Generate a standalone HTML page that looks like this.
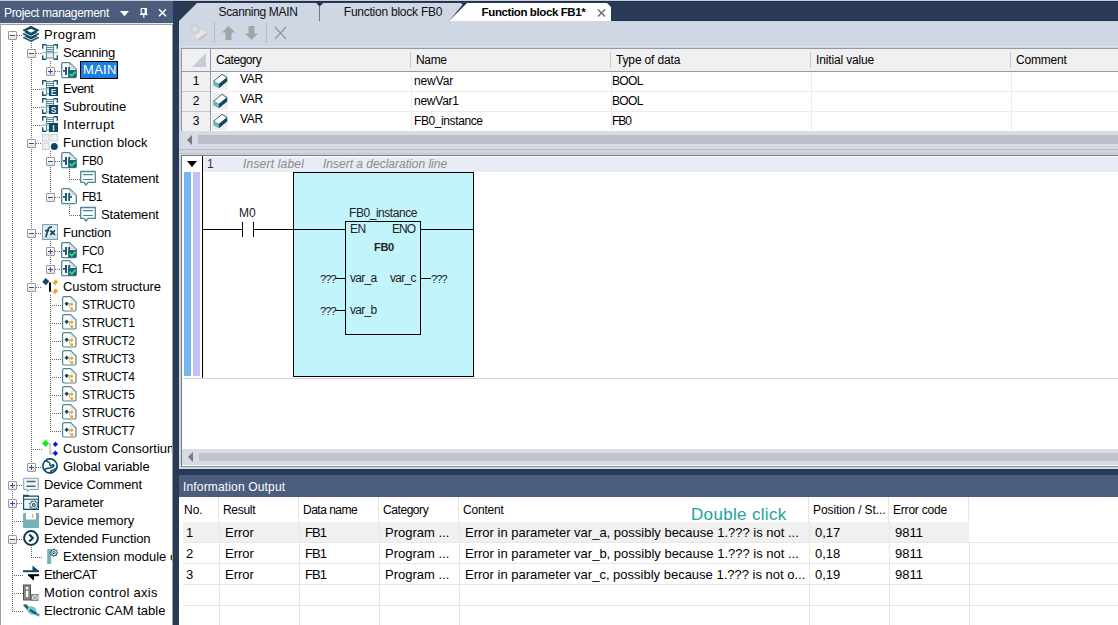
<!DOCTYPE html><html><head><meta charset="utf-8"><style>
*{margin:0;padding:0;box-sizing:border-box}
html,body{width:1118px;height:625px;overflow:hidden;background:#fff;font-family:"Liberation Sans", sans-serif;}
.a{position:absolute}
#left{position:absolute;left:0;top:0;width:173px;height:625px;background:#fff;overflow:hidden}
#lhdr{position:absolute;left:0;top:1px;width:173px;height:22px;background:#4b5c7d;color:#fff;font-size:12px;line-height:24px;padding-left:4px;letter-spacing:-0.32px}
#tree{position:absolute;left:0;top:0;width:172px;height:625px;overflow:hidden}
#tree>div{position:absolute}
.dv{width:1px;background:repeating-linear-gradient(to bottom,#666 0 1px,transparent 1px 2px)}
.dh{height:1px;background:repeating-linear-gradient(to right,#666 0 1px,transparent 1px 2px)}
.ex{width:9px;height:9px;border:1px solid #9a9a9a;border-radius:1px;background:linear-gradient(#fff,#e4e4e4)}
.ex i{position:absolute;background:#3a4aa0}
.ex .hm{left:1px;top:3px;width:5px;height:1px}
.ex .vm{left:3px;top:1px;width:1px;height:5px}
.ic{width:16px;height:16px}
.ic svg{display:block;overflow:visible}
.tt{font-size:13px;line-height:16px;color:#000;white-space:nowrap}
.tab{position:absolute;top:3px;height:18px;line-height:18px;font-size:12px;color:#111;text-align:center;white-space:nowrap;letter-spacing:-0.25px}
.th{position:absolute;font-size:12px;line-height:16px;color:#000;white-space:nowrap;letter-spacing:-0.25px}
.td{position:absolute;font-size:12px;line-height:16px;color:#000;white-space:nowrap;letter-spacing:-0.25px}
.lbl{position:absolute;font-size:12px;line-height:15px;color:#8a8a8a;font-style:italic;white-space:nowrap}
.ld{position:absolute;font-size:12px;line-height:16px;color:#222;white-space:nowrap}
.q{letter-spacing:-0.9px;font-size:11px}
.v{letter-spacing:-0.7px}
.ih{position:absolute;font-size:12px;line-height:16px;color:#000;white-space:nowrap}
.id{position:absolute;font-size:13px;line-height:16px;color:#000;white-space:nowrap}
.sel{font-size:13px;line-height:16px;height:18px;padding:0 0 0 2px;background:#1c7fe0;border:1px solid #000;color:#fff;width:38px}
</style></head><body>
<div class="a" style="left:173px;top:0;width:945px;height:625px;background:#293a56"></div>
<div class="a" style="left:173px;top:1px;width:945px;height:1px;background:#213150"></div>
<div class="a" style="left:179px;top:20px;width:939px;height:1px;background:#1f2f4c"></div>
<div class="a" style="left:0;top:0;width:1118px;height:1px;background:#c9ccd2"></div>
<div class="a" style="left:179px;top:21px;width:939px;height:448px;background:#cfd6e4"></div>
<svg class="a" style="left:179px;top:0" width="440" height="22" viewBox="0 0 440 22"><path d="M0 21 L18 3 H285 L270 21 Z" fill="#cfd6e4"/><path d="M140.5 5 V21" stroke="#6c7a90" stroke-width="1"/><path d="M137.3 3 H144.2 L140.6 6.6 Z" fill="#22324f"/><path d="M282 3 H289 L285.5 6.5 Z" fill="#1f2f4c"/><path d="M270 21 L288 3 H428 L432 7 V21 Z" fill="#fff"/></svg>
<div class="tab" style="left:197px;width:122px;letter-spacing:-0.33px">Scanning MAIN</div>
<div class="tab" style="left:320px;width:146px;letter-spacing:-0.24px">Function block FB0</div>
<div class="tab" style="left:466px;width:135px;font-weight:bold;color:#000;font-size:11.5px;letter-spacing:-0.39px">Function block FB1*</div>
<svg class="a" style="left:597px;top:8px" width="10" height="10" viewBox="0 0 10 10"><path d="M1 1.5L8 8.5M8 1.5L1 8.5" stroke="#707070" stroke-width="1.5"/></svg>
<svg class="a" style="left:188px;top:23px" width="20" height="20" viewBox="0 0 20 20"><path d="M5.5 13 L14.5 6.5 L19 9.5 L10.5 16 Z" fill="#e6e6e6" stroke="#cdcdcd" stroke-width="0.7"/><path d="M5.5 13 L10.5 16 V18.2 L5.5 15.2 Z" fill="#d8d8d8"/><path d="M10.5 16 L19 9.5 V11.7 L10.5 18.2 Z" fill="#bfbfbf"/><path d="M7 1.5V10.5M2.5 6H11.5M3.8 2.8L10.2 9.2M10.2 2.8L3.8 9.2" stroke="#c8c8c8" stroke-width="2"/><path d="M7 2.5V9.5M3.5 6H10.5M4.5 3.5L9.5 8.5M9.5 3.5L4.5 8.5" stroke="#ececec" stroke-width="0.8"/></svg>
<div class="a" style="left:214px;top:22px;width:1px;height:21px;background:#b6bdca"></div>
<svg class="a" style="left:222px;top:26px" width="14" height="14" viewBox="0 0 14 14"><path d="M6.5 0 L13 6.5 H9.5 V14 H3.5 V6.5 H0 Z" fill="#a4a4a4"/></svg>
<svg class="a" style="left:245px;top:26px" width="13" height="14" viewBox="0 0 13 14"><path d="M6.5 14 L13 7.5 H9.5 V0 H3.5 V7.5 H0 Z" fill="#a4a4a4"/></svg>
<div class="a" style="left:266px;top:22px;width:1px;height:21px;background:#b6bdca"></div>
<svg class="a" style="left:274px;top:26px" width="13" height="14" viewBox="0 0 13 14"><path d="M1 1L12 13M12 1L1 13" stroke="#969696" stroke-width="1.2"/></svg>
<div class="a" style="left:179px;top:46px;width:939px;height:1px;background:#dce1ea"></div>
<div class="a" style="left:181px;top:48px;width:937px;height:83px;background:#fff;border-left:1px solid #8f99ab;border-top:1px solid #8f99ab"></div>
<div class="a" style="left:182px;top:49px;width:936px;height:22px;background:#f0f0f0"></div>
<div class="a" style="left:182px;top:71px;width:936px;height:1px;background:#8f99ab"></div>
<div class="a" style="left:182px;top:72px;width:28px;height:59px;background:#f0f0f0"></div>
<div class="a" style="left:210px;top:48px;width:1px;height:83px;background:#8f99ab"></div>
<svg class="a" style="left:192px;top:53px" width="14" height="14" viewBox="0 0 14 14"><path d="M14 0 V14 H0 Z" fill="#c6ccd6"/></svg>
<div class="th" style="left:216px;top:52px;letter-spacing:-0.43px">Category</div>
<div class="a" style="left:410px;top:52px;width:1px;height:16px;background:#c4c8d0"></div>
<div class="a" style="left:411px;top:72px;width:1px;height:59px;background:#ececec"></div>
<div class="th" style="left:416px;top:52px;letter-spacing:-0.33px">Name</div>
<div class="a" style="left:610px;top:52px;width:1px;height:16px;background:#c4c8d0"></div>
<div class="a" style="left:611px;top:72px;width:1px;height:59px;background:#ececec"></div>
<div class="th" style="left:616px;top:52px;letter-spacing:-0.15px">Type of data</div>
<div class="a" style="left:810px;top:52px;width:1px;height:16px;background:#c4c8d0"></div>
<div class="a" style="left:811px;top:72px;width:1px;height:59px;background:#ececec"></div>
<div class="th" style="left:816px;top:52px;letter-spacing:-0.15px">Initial value</div>
<div class="a" style="left:1010px;top:52px;width:1px;height:16px;background:#c4c8d0"></div>
<div class="a" style="left:1011px;top:72px;width:1px;height:59px;background:#ececec"></div>
<div class="th" style="left:1016px;top:52px;letter-spacing:-0.2px">Comment</div>
<div class="a" style="left:182px;top:91px;width:28px;height:1px;background:#c4c8d0"></div>
<div class="a" style="left:211px;top:91px;width:907px;height:1px;background:#ececec"></div>
<div class="a" style="left:182px;top:111px;width:28px;height:1px;background:#c4c8d0"></div>
<div class="a" style="left:211px;top:111px;width:907px;height:1px;background:#ececec"></div>
<div class="td" style="left:182px;top:73px;width:28px;text-align:center">1</div>
<div class="a" style="left:212px;top:73px;width:16px;height:17px;background:#eeeeee"></div>
<svg class="a" style="left:212px;top:73px" width="16" height="16" viewBox="0 0 16 16"><path d="M1.5 8.3 L10 1.3 L15 4.5 L6.8 11.3 Z" fill="#fff" stroke="#1a5870" stroke-width="0.9" stroke-linejoin="round"/><path d="M1.2 8.3 L6.8 11.3 V15.3 L1.2 12.3 Z" fill="#6ab8c0"/><path d="M6.8 11.3 L15.2 4.5 V8.5 L6.8 15.3 Z" fill="#0e4660"/></svg>
<div class="td" style="left:240px;top:71px">VAR</div>
<div class="td" style="left:414px;top:73px;letter-spacing:-0.12px">newVar</div>
<div class="td" style="left:612px;top:73px;letter-spacing:-0.67px">BOOL</div>
<div class="td" style="left:182px;top:93px;width:28px;text-align:center">2</div>
<div class="a" style="left:212px;top:93px;width:16px;height:17px;background:#eeeeee"></div>
<svg class="a" style="left:212px;top:93px" width="16" height="16" viewBox="0 0 16 16"><path d="M1.5 8.3 L10 1.3 L15 4.5 L6.8 11.3 Z" fill="#fff" stroke="#1a5870" stroke-width="0.9" stroke-linejoin="round"/><path d="M1.2 8.3 L6.8 11.3 V15.3 L1.2 12.3 Z" fill="#6ab8c0"/><path d="M6.8 11.3 L15.2 4.5 V8.5 L6.8 15.3 Z" fill="#0e4660"/></svg>
<div class="td" style="left:240px;top:91px">VAR</div>
<div class="td" style="left:414px;top:93px;letter-spacing:-0.25px">newVar1</div>
<div class="td" style="left:612px;top:93px;letter-spacing:-0.67px">BOOL</div>
<div class="td" style="left:182px;top:113px;width:28px;text-align:center">3</div>
<div class="a" style="left:212px;top:113px;width:16px;height:17px;background:#eeeeee"></div>
<svg class="a" style="left:212px;top:113px" width="16" height="16" viewBox="0 0 16 16"><path d="M1.5 8.3 L10 1.3 L15 4.5 L6.8 11.3 Z" fill="#fff" stroke="#1a5870" stroke-width="0.9" stroke-linejoin="round"/><path d="M1.2 8.3 L6.8 11.3 V15.3 L1.2 12.3 Z" fill="#6ab8c0"/><path d="M6.8 11.3 L15.2 4.5 V8.5 L6.8 15.3 Z" fill="#0e4660"/></svg>
<div class="td" style="left:240px;top:111px">VAR</div>
<div class="td" style="left:414px;top:113px;letter-spacing:-0.4px">FB0_instance</div>
<div class="td" style="left:612px;top:113px;letter-spacing:-1.1px">FB0</div>
<div class="a" style="left:181px;top:131px;width:937px;height:18px;background:#d6dbe5"></div>
<svg class="a" style="left:186px;top:135px" width="8" height="10" viewBox="0 0 8 10"><path d="M6 0 V10 L1 5 Z" fill="#7a7a7a"/></svg>
<div class="a" style="left:198px;top:135px;width:920px;height:9px;background:#b9bec8"></div>
<div class="a" style="left:179px;top:149px;width:939px;height:1px;background:#b4bccb"></div>
<div class="a" style="left:179px;top:153px;width:939px;height:1px;background:#c0c6d2"></div>
<div class="a" style="left:181px;top:155px;width:937px;height:312px;background:#fff;border-left:1px solid #7a7a7a;border-top:1px solid #7a7a7a"></div>
<div class="a" style="left:203px;top:157px;width:915px;height:15px;background:#e8ecf4"></div>
<svg class="a" style="left:187px;top:161px" width="10" height="6" viewBox="0 0 10 6"><path d="M0 0 H10 L5 6 Z" fill="#000"/></svg>
<div class="a" style="left:202px;top:156px;width:1px;height:223px;background:#000"></div>
<div class="a" style="left:184px;top:172px;width:7px;height:204px;background:#74b8f2"></div>
<div class="a" style="left:193px;top:172px;width:7px;height:204px;background:#c2c0fa"></div>
<div class="lbl" style="left:207px;top:157px;font-style:normal;color:#333">1</div>
<div class="lbl" style="left:243px;top:157px;letter-spacing:0.2px">Insert label</div>
<div class="lbl" style="left:323px;top:157px">Insert a declaration line</div>
<div class="a" style="left:183px;top:378px;width:935px;height:1px;background:#d4d4d4"></div>
<div class="a" style="left:293px;top:172px;width:181px;height:205px;background:#c2f4fc;border:1px solid #000"></div>
<div class="a" style="left:203px;top:229px;width:39px;height:1px;background:#000"></div>
<div class="a" style="left:242px;top:222px;width:1px;height:15px;background:#000"></div>
<div class="a" style="left:253px;top:222px;width:1px;height:15px;background:#000"></div>
<div class="a" style="left:254px;top:229px;width:91px;height:1px;background:#000"></div>
<div class="a" style="left:420px;top:229px;width:54px;height:1px;background:#000"></div>
<div class="ld" style="left:239px;top:205px">M0</div>
<div class="a" style="left:345px;top:221px;width:76px;height:114px;border:1px solid #000"></div>
<div class="ld" style="left:340px;top:205px;width:86px;text-align:center;letter-spacing:-0.45px">FB0_instance</div>
<div class="ld" style="left:350px;top:221px;letter-spacing:-0.6px">EN</div>
<div class="ld" style="left:392px;top:221px;letter-spacing:-0.9px">ENO</div>
<div class="ld" style="left:346px;top:239px;width:76px;text-align:center;font-weight:bold;font-size:11px;letter-spacing:-0.3px">FB0</div>
<div class="ld q" style="left:320px;top:271px">???</div>
<div class="a" style="left:335px;top:278px;width:10px;height:1px;background:#000"></div>
<div class="ld v" style="left:350px;top:270px">var_a</div>
<div class="ld v" style="left:390px;top:270px">var_c</div>
<div class="a" style="left:421px;top:278px;width:10px;height:1px;background:#000"></div>
<div class="ld q" style="left:431px;top:271px">???</div>
<div class="ld q" style="left:320px;top:303px">???</div>
<div class="a" style="left:335px;top:310px;width:10px;height:1px;background:#000"></div>
<div class="ld v" style="left:350px;top:302px">var_b</div>
<div class="a" style="left:182px;top:449px;width:936px;height:16px;background:#d6dbe5"></div>
<svg class="a" style="left:187px;top:452px" width="8" height="10" viewBox="0 0 8 10"><path d="M6 0 V10 L1 5 Z" fill="#7a7a7a"/></svg>
<div class="a" style="left:199px;top:453px;width:919px;height:8px;background:#bfc3cb"></div>
<div class="a" style="left:181px;top:466px;width:937px;height:1px;background:#8a8a8a"></div>
<div class="a" style="left:179px;top:475px;width:939px;height:22px;background:#4b5c7d;color:#fff;font-size:12px;line-height:24px;padding-left:4px;letter-spacing:0.16px">Information Output</div>
<div class="a" style="left:179px;top:497px;width:939px;height:128px;background:#fff"></div>
<div class="a" style="left:183px;top:522px;width:786px;height:20px;background:#f0f0f0"></div>
<div class="ih" style="left:184px;top:502px;letter-spacing:0px">No.</div>
<div class="a" style="left:218px;top:497px;width:1px;height:25px;background:#e4e4e4"></div>
<div class="a" style="left:219px;top:522px;width:1px;height:103px;background:#e6e6e6"></div>
<div class="ih" style="left:223px;top:502px;letter-spacing:-0.3px">Result</div>
<div class="a" style="left:298px;top:497px;width:1px;height:25px;background:#e4e4e4"></div>
<div class="a" style="left:299px;top:522px;width:1px;height:103px;background:#e6e6e6"></div>
<div class="ih" style="left:303px;top:502px;letter-spacing:-0.5px">Data name</div>
<div class="a" style="left:378px;top:497px;width:1px;height:25px;background:#e4e4e4"></div>
<div class="a" style="left:379px;top:522px;width:1px;height:103px;background:#e6e6e6"></div>
<div class="ih" style="left:383px;top:502px;letter-spacing:-0.43px">Category</div>
<div class="a" style="left:458px;top:497px;width:1px;height:25px;background:#e4e4e4"></div>
<div class="a" style="left:459px;top:522px;width:1px;height:103px;background:#e6e6e6"></div>
<div class="ih" style="left:463px;top:502px;letter-spacing:-0.2px">Content</div>
<div class="a" style="left:808px;top:497px;width:1px;height:25px;background:#e4e4e4"></div>
<div class="a" style="left:809px;top:522px;width:1px;height:103px;background:#e6e6e6"></div>
<div class="ih" style="left:813px;top:502px;letter-spacing:-0.1px">Position / St...</div>
<div class="a" style="left:888px;top:497px;width:1px;height:25px;background:#e4e4e4"></div>
<div class="a" style="left:889px;top:522px;width:1px;height:103px;background:#e6e6e6"></div>
<div class="ih" style="left:893px;top:502px;letter-spacing:-0.2px">Error code</div>
<div class="a" style="left:968px;top:497px;width:1px;height:25px;background:#e4e4e4"></div>
<div class="a" style="left:969px;top:542px;width:1px;height:83px;background:#e6e6e6"></div>
<div class="a" style="left:183px;top:542px;width:935px;height:1px;background:#e6e6e6"></div>
<div class="a" style="left:183px;top:563px;width:935px;height:1px;background:#e6e6e6"></div>
<div class="a" style="left:183px;top:584px;width:935px;height:1px;background:#e6e6e6"></div>
<div class="a" style="left:183px;top:605px;width:935px;height:1px;background:#e6e6e6"></div>
<div class="id" style="left:186px;top:525px;letter-spacing:0px">1</div>
<div class="id" style="left:225px;top:525px;letter-spacing:0px">Error</div>
<div class="id" style="left:305px;top:525px;letter-spacing:-0.9px">FB1</div>
<div class="id" style="left:385px;top:525px;letter-spacing:0px">Program ...</div>
<div class="id" style="left:465px;top:525px;letter-spacing:0px">Error in parameter var_a, possibly because 1.??? is not ...</div>
<div class="id" style="left:815px;top:525px;letter-spacing:0px">0,17</div>
<div class="id" style="left:895px;top:525px;letter-spacing:0px">9811</div>
<div class="id" style="left:186px;top:546px;letter-spacing:0px">2</div>
<div class="id" style="left:225px;top:546px;letter-spacing:0px">Error</div>
<div class="id" style="left:305px;top:546px;letter-spacing:-0.9px">FB1</div>
<div class="id" style="left:385px;top:546px;letter-spacing:0px">Program ...</div>
<div class="id" style="left:465px;top:546px;letter-spacing:0px">Error in parameter var_b, possibly because 1.??? is not ...</div>
<div class="id" style="left:815px;top:546px;letter-spacing:0px">0,18</div>
<div class="id" style="left:895px;top:546px;letter-spacing:0px">9811</div>
<div class="id" style="left:186px;top:567px;letter-spacing:0px">3</div>
<div class="id" style="left:225px;top:567px;letter-spacing:0px">Error</div>
<div class="id" style="left:305px;top:567px;letter-spacing:-0.9px">FB1</div>
<div class="id" style="left:385px;top:567px;letter-spacing:0px">Program ...</div>
<div class="id" style="left:465px;top:567px;letter-spacing:0px">Error in parameter var_c, possibly because 1.??? is not o...</div>
<div class="id" style="left:815px;top:567px;letter-spacing:0px">0,19</div>
<div class="id" style="left:895px;top:567px;letter-spacing:0px">9811</div>
<div class="a" style="left:691px;top:505px;font-size:17px;line-height:20px;color:#1ea3a0;letter-spacing:0.33px">Double click</div>
<div id="left"><div class="a" style="left:0;top:0;width:173px;height:1px;background:#c9ccd2"></div>
<div id="lhdr">Project management</div>
<svg class="a" style="left:120px;top:11px" width="9" height="6" viewBox="0 0 9 6"><path d="M0 0H9L4.5 5.2Z" fill="#fff"/></svg>
<svg class="a" style="left:140px;top:7px" width="8" height="11" viewBox="0 0 8 11"><path d="M1.2 1.5H6.3V6.9H1.2Z" fill="none" stroke="#fff" stroke-width="1.2"/><rect x="4.6" y="1.5" width="1.7" height="5.5" fill="#fff"/><rect x="0" y="6.9" width="7.5" height="1.2" fill="#fff"/><rect x="3.2" y="7.8" width="1.2" height="3" fill="#fff"/></svg>
<svg class="a" style="left:158px;top:8px" width="9" height="9" viewBox="0 0 9 9"><path d="M1 1.2L8 8.2M8 1.2L1 8.2" stroke="#fff" stroke-width="1.5"/></svg>
<div class="a" style="left:0;top:23px;width:172px;height:1px;background:#e6e8ec"></div><div class="a" style="left:0;top:24px;width:172px;height:1px;background:#a0a0a0"></div><div class="a" style="left:0;top:24px;width:1px;height:601px;background:#a0a0a0"></div><div class="a" style="left:172px;top:24px;width:1px;height:601px;background:#a0a0a0"></div>
<div id="tree"><div class="dv" style="left:31px;top:43px;height:425px"></div>
<div class="dv" style="left:50px;top:61px;height:11px"></div>
<div class="dv" style="left:50px;top:151px;height:47px"></div>
<div class="dv" style="left:69px;top:169px;height:11px"></div>
<div class="dv" style="left:69px;top:205px;height:11px"></div>
<div class="dv" style="left:50px;top:241px;height:29px"></div>
<div class="dv" style="left:50px;top:295px;height:137px"></div>
<div class="dv" style="left:31px;top:547px;height:11px"></div>
<div class="dv" style="left:12px;top:41px;height:571px"></div>
<div class="dh" style="left:17px;top:35px;width:6px"></div>
<div class="ex" style="left:8px;top:31px"><i class="hm"></i></div>
<div class="ic" style="left:23px;top:26px"><svg width="16" height="16" viewBox="0 0 16 16"><g fill="#0c4a62" stroke="#0c4a62" stroke-width="0.8" stroke-linejoin="round"><path d="M8 7.4L16 11.6L8 15.6L0 11.6Z"/><path d="M8 3.7L16 7.9L8 12.2L0 7.9Z"/><path d="M8 0.2L16 4.2L8 8.5L0 4.2Z"/></g><path d="M0 6.2L8 10.2L16 6.2M0 9.9L8 13.9L16 9.9" fill="none" stroke="#fff" stroke-width="0.8"/><path d="M8 2.7L12.2 4.5L8 6.7L3.8 4.5Z" fill="#fff"/></svg></div>
<div class="tt" style="left:44px;top:27px;letter-spacing:0.33px">Program</div>
<div class="dh" style="left:36px;top:53px;width:6px"></div>
<div class="ex" style="left:27px;top:49px"><i class="hm"></i></div>
<div class="ic" style="left:42px;top:44px"><svg width="16" height="16" viewBox="0 0 16 16"><rect x="3.5" y="1" width="9" height="14" fill="#eceeef"/><path d="M0.7 4.8V0.7H4.5 M11.5 0.7H15.3V4.8 M0.7 11.2V15.3H4.5 M11.5 15.3H15.3V11.2" stroke="#1a5870" stroke-width="1.4" fill="none"/><rect x="4.5" y="1.5" width="7" height="12.5" fill="none" stroke="#5e8e9c" stroke-width="1"/><path d="M4.5 3.5H11.5M4.5 5.5H11.5M4.5 7.5H11.5" stroke="#5e8e9c" stroke-width="1"/><path d="M0 8.8H16" stroke="#74b8bc" stroke-width="1"/></svg></div>
<div class="tt" style="left:63px;top:45px;letter-spacing:-0.29px">Scanning</div>
<div class="dh" style="left:55px;top:71px;width:6px"></div>
<div class="ex" style="left:46px;top:67px"><i class="hm"></i><i class="vm"></i></div>
<div class="ic" style="left:61px;top:62px"><svg width="16" height="16" viewBox="0 0 16 16"><path d="M0.7 2.2Q0.7 0.7 2.2 0.7H8.5L15.3 7.2V14.2Q15.3 15.6 13.8 15.6H2.2Q0.7 15.6 0.7 14.2Z" fill="#fff" stroke="#4e8696" stroke-width="1.3"/><path d="M8.5 1.5V5.5Q8.5 6.7 9.7 6.7H14.5Z" fill="#dde8ec" stroke="#9ab8c2" stroke-width="0.6"/><path d="M2 8.8H4" stroke="#1a5a74" stroke-width="1.8"/><rect x="4" y="5" width="2" height="8" fill="#1a5a74"/><rect x="7.2" y="5" width="1.8" height="8" fill="#1a5a74"/><rect x="7.2" y="8" width="8.1" height="7.6" fill="#2a5a84"/><path d="M8.6 11.6L10.8 13.8L14.6 9.6" stroke="#1ef04a" stroke-width="1.7" fill="none"/></svg></div>
<div class="sel" style="left:80px;top:61px;letter-spacing:0.3px">MAIN</div>
<div class="dh" style="left:31px;top:89px;width:11px"></div>
<div class="ic" style="left:42px;top:80px"><svg width="16" height="16" viewBox="0 0 16 16"><rect x="3.5" y="1" width="9" height="14" fill="#eceeef"/><path d="M0.7 4.8V0.7H4.5 M11.5 0.7H15.3V4.8 M0.7 11.2V15.3H4.5 M11.5 15.3H15.3V11.2" stroke="#1a5870" stroke-width="1.4" fill="none"/><rect x="4.5" y="1.5" width="7" height="12.5" fill="none" stroke="#5e8e9c" stroke-width="1"/><path d="M4.5 3.5H11.5M4.5 5.5H11.5M4.5 7.5H11.5" stroke="#5e8e9c" stroke-width="1"/><path d="M0 9H7" stroke="#74b8bc" stroke-width="1"/><rect x="7" y="7" width="9" height="9" fill="#0e4660"/><text x="11.5" y="14.8" font-family="Liberation Sans" font-size="8.5" font-weight="bold" fill="#dfeaee" text-anchor="middle">E</text></svg></div>
<div class="tt" style="left:63px;top:81px;letter-spacing:-0.6px">Event</div>
<div class="dh" style="left:31px;top:107px;width:11px"></div>
<div class="ic" style="left:42px;top:98px"><svg width="16" height="16" viewBox="0 0 16 16"><rect x="3.5" y="1" width="9" height="14" fill="#eceeef"/><path d="M0.7 4.8V0.7H4.5 M11.5 0.7H15.3V4.8 M0.7 11.2V15.3H4.5 M11.5 15.3H15.3V11.2" stroke="#1a5870" stroke-width="1.4" fill="none"/><rect x="4.5" y="1.5" width="7" height="12.5" fill="none" stroke="#5e8e9c" stroke-width="1"/><path d="M4.5 3.5H11.5M4.5 5.5H11.5M4.5 7.5H11.5" stroke="#5e8e9c" stroke-width="1"/><path d="M0 9H7" stroke="#74b8bc" stroke-width="1"/><rect x="7" y="7" width="9" height="9" fill="#0e4660"/><text x="11.5" y="14.8" font-family="Liberation Sans" font-size="8.5" font-weight="bold" fill="#dfeaee" text-anchor="middle">S</text></svg></div>
<div class="tt" style="left:63px;top:99px;letter-spacing:0.05px">Subroutine</div>
<div class="dh" style="left:31px;top:125px;width:11px"></div>
<div class="ic" style="left:42px;top:116px"><svg width="16" height="16" viewBox="0 0 16 16"><rect x="3.5" y="1" width="9" height="14" fill="#eceeef"/><path d="M0.7 4.8V0.7H4.5 M11.5 0.7H15.3V4.8 M0.7 11.2V15.3H4.5 M11.5 15.3H15.3V11.2" stroke="#1a5870" stroke-width="1.4" fill="none"/><rect x="4.5" y="1.5" width="7" height="12.5" fill="none" stroke="#5e8e9c" stroke-width="1"/><path d="M4.5 3.5H11.5M4.5 5.5H11.5M4.5 7.5H11.5" stroke="#5e8e9c" stroke-width="1"/><path d="M0 9H7" stroke="#74b8bc" stroke-width="1"/><rect x="7" y="7" width="9" height="9" fill="#0e4660"/><text x="11.5" y="14.8" font-family="Liberation Sans" font-size="8.5" font-weight="bold" fill="#dfeaee" text-anchor="middle">I</text></svg></div>
<div class="tt" style="left:63px;top:117px;letter-spacing:0.33px">Interrupt</div>
<div class="dh" style="left:36px;top:143px;width:6px"></div>
<div class="ex" style="left:27px;top:139px"><i class="hm"></i></div>
<div class="ic" style="left:42px;top:134px"><svg width="16" height="16" viewBox="0 0 16 16"><rect x="0.5" y="0.5" width="6.5" height="6.5" fill="#eef1f2" stroke="#c4d2d8"/><rect x="9" y="0.5" width="6.5" height="6.5" fill="#eef1f2" stroke="#c4d2d8"/><rect x="0.5" y="9" width="6.5" height="6.5" fill="#eef1f2" stroke="#c4d2d8"/><circle cx="12.3" cy="12.4" r="3.5" fill="#0e4660"/></svg></div>
<div class="tt" style="left:63px;top:135px;letter-spacing:0.05px">Function block</div>
<div class="dh" style="left:55px;top:161px;width:6px"></div>
<div class="ex" style="left:46px;top:157px"><i class="hm"></i></div>
<div class="ic" style="left:61px;top:152px"><svg width="16" height="16" viewBox="0 0 16 16"><path d="M0.7 2.2Q0.7 0.7 2.2 0.7H8.5L15.3 7.2V14.2Q15.3 15.6 13.8 15.6H2.2Q0.7 15.6 0.7 14.2Z" fill="#fff" stroke="#4e8696" stroke-width="1.3"/><path d="M8.5 1.5V5.5Q8.5 6.7 9.7 6.7H14.5Z" fill="#dde8ec" stroke="#9ab8c2" stroke-width="0.6"/><path d="M2 8.8H4" stroke="#1a5a74" stroke-width="1.8"/><rect x="4" y="5" width="2" height="8" fill="#1a5a74"/><rect x="7.2" y="5" width="1.8" height="8" fill="#1a5a74"/><rect x="7.2" y="8" width="8.1" height="7.6" fill="#2a5a84"/><path d="M8.6 11.6L10.8 13.8L14.6 9.6" stroke="#1ef04a" stroke-width="1.7" fill="none"/></svg></div>
<div class="tt" style="left:82px;top:153px;font-size:12px;letter-spacing:-0.4px">FB0</div>
<div class="dh" style="left:69px;top:179px;width:11px"></div>
<div class="ic" style="left:80px;top:170px"><svg width="16" height="16" viewBox="0 0 16 16"><path d="M0.7 1.5H15.3V12.3H8L6 15L4 12.3H0.7Z" fill="#fff" stroke="#4e8696" stroke-width="1.3" stroke-linejoin="round"/><path d="M3 4.6H13M3 9.5H13" stroke="#4e8696" stroke-width="1.2"/></svg></div>
<div class="tt" style="left:101px;top:171px;letter-spacing:-0.18px">Statement</div>
<div class="dh" style="left:55px;top:197px;width:6px"></div>
<div class="ex" style="left:46px;top:193px"><i class="hm"></i></div>
<div class="ic" style="left:61px;top:188px"><svg width="16" height="16" viewBox="0 0 16 16"><path d="M0.7 2.2Q0.7 0.7 2.2 0.7H8.5L15.3 7.2V14.2Q15.3 15.6 13.8 15.6H2.2Q0.7 15.6 0.7 14.2Z" fill="#fff" stroke="#4e8696" stroke-width="1.3"/><path d="M8.5 1.5V5.5Q8.5 6.7 9.7 6.7H14.5Z" fill="#dde8ec" stroke="#9ab8c2" stroke-width="0.6"/><path d="M2 8.8H4" stroke="#1a5a74" stroke-width="1.8"/><rect x="4" y="5" width="2" height="8" fill="#1a5a74"/><rect x="7.2" y="5" width="1.8" height="8" fill="#1a5a74"/><path d="M9 8.8H11" stroke="#1a5a74" stroke-width="1.8"/></svg></div>
<div class="tt" style="left:82px;top:189px;font-size:12px;letter-spacing:-0.8px">FB1</div>
<div class="dh" style="left:69px;top:215px;width:11px"></div>
<div class="ic" style="left:80px;top:206px"><svg width="16" height="16" viewBox="0 0 16 16"><path d="M0.7 1.5H15.3V12.3H8L6 15L4 12.3H0.7Z" fill="#fff" stroke="#4e8696" stroke-width="1.3" stroke-linejoin="round"/><path d="M3 4.6H13M3 9.5H13" stroke="#4e8696" stroke-width="1.2"/></svg></div>
<div class="tt" style="left:101px;top:207px;letter-spacing:-0.18px">Statement</div>
<div class="dh" style="left:36px;top:233px;width:6px"></div>
<div class="ex" style="left:27px;top:229px"><i class="hm"></i></div>
<div class="ic" style="left:42px;top:224px"><svg width="16" height="16" viewBox="0 0 16 16"><defs><linearGradient id="gfx" x1="0" y1="0" x2="0" y2="1"><stop offset="0" stop-color="#d4e2e8"/><stop offset="0.45" stop-color="#f6f9fa"/><stop offset="1" stop-color="#c4d8de"/></linearGradient></defs><rect x="0.5" y="0.5" width="15" height="15" fill="url(#gfx)" stroke="#7fa4b0"/><path d="M3.8 13.2 C5 10 5.2 6 6.6 4.2 C7.4 3.2 8.4 3 10 3.1 M3 6.6H7.2" stroke="#0c4a62" stroke-width="1.7" fill="none"/><path d="M8.3 6.3L12.9 10.8M12.9 6.3L8.3 10.8" stroke="#0c4a62" stroke-width="1.8"/></svg></div>
<div class="tt" style="left:63px;top:225px;letter-spacing:-0.24px">Function</div>
<div class="dh" style="left:55px;top:251px;width:6px"></div>
<div class="ex" style="left:46px;top:247px"><i class="hm"></i><i class="vm"></i></div>
<div class="ic" style="left:61px;top:242px"><svg width="16" height="16" viewBox="0 0 16 16"><path d="M0.7 2.2Q0.7 0.7 2.2 0.7H8.5L15.3 7.2V14.2Q15.3 15.6 13.8 15.6H2.2Q0.7 15.6 0.7 14.2Z" fill="#fff" stroke="#4e8696" stroke-width="1.3"/><path d="M8.5 1.5V5.5Q8.5 6.7 9.7 6.7H14.5Z" fill="#dde8ec" stroke="#9ab8c2" stroke-width="0.6"/><path d="M2 8.8H4" stroke="#1a5a74" stroke-width="1.8"/><rect x="4" y="5" width="2" height="8" fill="#1a5a74"/><rect x="7.2" y="5" width="1.8" height="8" fill="#1a5a74"/><rect x="7.2" y="8" width="8.1" height="7.6" fill="#2a5a84"/><path d="M8.6 11.6L10.8 13.8L14.6 9.6" stroke="#1ef04a" stroke-width="1.7" fill="none"/></svg></div>
<div class="tt" style="left:82px;top:243px;font-size:12px;letter-spacing:-0.4px">FC0</div>
<div class="dh" style="left:55px;top:269px;width:6px"></div>
<div class="ex" style="left:46px;top:265px"><i class="hm"></i><i class="vm"></i></div>
<div class="ic" style="left:61px;top:260px"><svg width="16" height="16" viewBox="0 0 16 16"><path d="M0.7 2.2Q0.7 0.7 2.2 0.7H8.5L15.3 7.2V14.2Q15.3 15.6 13.8 15.6H2.2Q0.7 15.6 0.7 14.2Z" fill="#fff" stroke="#4e8696" stroke-width="1.3"/><path d="M8.5 1.5V5.5Q8.5 6.7 9.7 6.7H14.5Z" fill="#dde8ec" stroke="#9ab8c2" stroke-width="0.6"/><path d="M2 8.8H4" stroke="#1a5a74" stroke-width="1.8"/><rect x="4" y="5" width="2" height="8" fill="#1a5a74"/><rect x="7.2" y="5" width="1.8" height="8" fill="#1a5a74"/><rect x="7.2" y="8" width="8.1" height="7.6" fill="#2a5a84"/><path d="M8.6 11.6L10.8 13.8L14.6 9.6" stroke="#1ef04a" stroke-width="1.7" fill="none"/></svg></div>
<div class="tt" style="left:82px;top:261px;font-size:12px;letter-spacing:-0.8px">FC1</div>
<div class="dh" style="left:36px;top:287px;width:6px"></div>
<div class="ex" style="left:27px;top:283px"><i class="hm"></i></div>
<div class="ic" style="left:42px;top:278px"><svg width="16" height="16" viewBox="0 0 16 16"><g transform="translate(0,1)"><path d="M3.6 -1 L7.4 2.2 L4 6.2 L0.2 3 Z" fill="#0e4a60"/><path d="M8 3.5V12.8" stroke="#000" stroke-width="1.9"/><path d="M9 3.2H10.5M9 12.3H10.5" stroke="#bbb" stroke-width="0.8"/><path d="M13.6 0.6 L16 2.8 L13.2 6.2 L10.8 4 Z" fill="#ff9a10"/><path d="M13.6 9.5 L16 11.7 L13.2 15.1 L10.8 12.9 Z" fill="#ff9a10"/></g></svg></div>
<div class="tt" style="left:63px;top:279px;letter-spacing:-0.06px">Custom structure</div>
<div class="dh" style="left:50px;top:305px;width:11px"></div>
<div class="ic" style="left:61px;top:296px"><svg width="16" height="16" viewBox="0 0 16 16"><path d="M1.6 2Q1.6 0.6 3 0.6H9.5L15 6.1V13.8Q15 15 13.8 15H3Q1.6 15 1.6 13.6Z" fill="#fff" stroke="#4e8696" stroke-width="1.2"/><path d="M9.5 1.4V4.8Q9.5 5.8 10.5 5.8H14.2Z" fill="#dde8ec"/><path d="M5.7 5.6 L7.9 7.8 L5.7 10 L3.5 7.8 Z" fill="#0e4a60"/><path d="M8.4 7V12" stroke="#b4b4b4" stroke-width="0.9"/><path d="M10.7 6.3 L12.6 8.2 L10.7 10.1 L8.8 8.2 Z M10.8 10.8 L12.7 12.7 L10.8 14.6 L8.9 12.7Z" fill="#ff9a10"/></svg></div>
<div class="tt" style="left:82px;top:297px;font-size:12px;letter-spacing:-0.42px">STRUCT0</div>
<div class="dh" style="left:50px;top:323px;width:11px"></div>
<div class="ic" style="left:61px;top:314px"><svg width="16" height="16" viewBox="0 0 16 16"><path d="M1.6 2Q1.6 0.6 3 0.6H9.5L15 6.1V13.8Q15 15 13.8 15H3Q1.6 15 1.6 13.6Z" fill="#fff" stroke="#4e8696" stroke-width="1.2"/><path d="M9.5 1.4V4.8Q9.5 5.8 10.5 5.8H14.2Z" fill="#dde8ec"/><path d="M5.7 5.6 L7.9 7.8 L5.7 10 L3.5 7.8 Z" fill="#0e4a60"/><path d="M8.4 7V12" stroke="#b4b4b4" stroke-width="0.9"/><path d="M10.7 6.3 L12.6 8.2 L10.7 10.1 L8.8 8.2 Z M10.8 10.8 L12.7 12.7 L10.8 14.6 L8.9 12.7Z" fill="#ff9a10"/></svg></div>
<div class="tt" style="left:82px;top:315px;font-size:12px;letter-spacing:-0.42px">STRUCT1</div>
<div class="dh" style="left:50px;top:341px;width:11px"></div>
<div class="ic" style="left:61px;top:332px"><svg width="16" height="16" viewBox="0 0 16 16"><path d="M1.6 2Q1.6 0.6 3 0.6H9.5L15 6.1V13.8Q15 15 13.8 15H3Q1.6 15 1.6 13.6Z" fill="#fff" stroke="#4e8696" stroke-width="1.2"/><path d="M9.5 1.4V4.8Q9.5 5.8 10.5 5.8H14.2Z" fill="#dde8ec"/><path d="M5.7 5.6 L7.9 7.8 L5.7 10 L3.5 7.8 Z" fill="#0e4a60"/><path d="M8.4 7V12" stroke="#b4b4b4" stroke-width="0.9"/><path d="M10.7 6.3 L12.6 8.2 L10.7 10.1 L8.8 8.2 Z M10.8 10.8 L12.7 12.7 L10.8 14.6 L8.9 12.7Z" fill="#ff9a10"/></svg></div>
<div class="tt" style="left:82px;top:333px;font-size:12px;letter-spacing:-0.42px">STRUCT2</div>
<div class="dh" style="left:50px;top:359px;width:11px"></div>
<div class="ic" style="left:61px;top:350px"><svg width="16" height="16" viewBox="0 0 16 16"><path d="M1.6 2Q1.6 0.6 3 0.6H9.5L15 6.1V13.8Q15 15 13.8 15H3Q1.6 15 1.6 13.6Z" fill="#fff" stroke="#4e8696" stroke-width="1.2"/><path d="M9.5 1.4V4.8Q9.5 5.8 10.5 5.8H14.2Z" fill="#dde8ec"/><path d="M5.7 5.6 L7.9 7.8 L5.7 10 L3.5 7.8 Z" fill="#0e4a60"/><path d="M8.4 7V12" stroke="#b4b4b4" stroke-width="0.9"/><path d="M10.7 6.3 L12.6 8.2 L10.7 10.1 L8.8 8.2 Z M10.8 10.8 L12.7 12.7 L10.8 14.6 L8.9 12.7Z" fill="#ff9a10"/></svg></div>
<div class="tt" style="left:82px;top:351px;font-size:12px;letter-spacing:-0.42px">STRUCT3</div>
<div class="dh" style="left:50px;top:377px;width:11px"></div>
<div class="ic" style="left:61px;top:368px"><svg width="16" height="16" viewBox="0 0 16 16"><path d="M1.6 2Q1.6 0.6 3 0.6H9.5L15 6.1V13.8Q15 15 13.8 15H3Q1.6 15 1.6 13.6Z" fill="#fff" stroke="#4e8696" stroke-width="1.2"/><path d="M9.5 1.4V4.8Q9.5 5.8 10.5 5.8H14.2Z" fill="#dde8ec"/><path d="M5.7 5.6 L7.9 7.8 L5.7 10 L3.5 7.8 Z" fill="#0e4a60"/><path d="M8.4 7V12" stroke="#b4b4b4" stroke-width="0.9"/><path d="M10.7 6.3 L12.6 8.2 L10.7 10.1 L8.8 8.2 Z M10.8 10.8 L12.7 12.7 L10.8 14.6 L8.9 12.7Z" fill="#ff9a10"/></svg></div>
<div class="tt" style="left:82px;top:369px;font-size:12px;letter-spacing:-0.42px">STRUCT4</div>
<div class="dh" style="left:50px;top:395px;width:11px"></div>
<div class="ic" style="left:61px;top:386px"><svg width="16" height="16" viewBox="0 0 16 16"><path d="M1.6 2Q1.6 0.6 3 0.6H9.5L15 6.1V13.8Q15 15 13.8 15H3Q1.6 15 1.6 13.6Z" fill="#fff" stroke="#4e8696" stroke-width="1.2"/><path d="M9.5 1.4V4.8Q9.5 5.8 10.5 5.8H14.2Z" fill="#dde8ec"/><path d="M5.7 5.6 L7.9 7.8 L5.7 10 L3.5 7.8 Z" fill="#0e4a60"/><path d="M8.4 7V12" stroke="#b4b4b4" stroke-width="0.9"/><path d="M10.7 6.3 L12.6 8.2 L10.7 10.1 L8.8 8.2 Z M10.8 10.8 L12.7 12.7 L10.8 14.6 L8.9 12.7Z" fill="#ff9a10"/></svg></div>
<div class="tt" style="left:82px;top:387px;font-size:12px;letter-spacing:-0.42px">STRUCT5</div>
<div class="dh" style="left:50px;top:413px;width:11px"></div>
<div class="ic" style="left:61px;top:404px"><svg width="16" height="16" viewBox="0 0 16 16"><path d="M1.6 2Q1.6 0.6 3 0.6H9.5L15 6.1V13.8Q15 15 13.8 15H3Q1.6 15 1.6 13.6Z" fill="#fff" stroke="#4e8696" stroke-width="1.2"/><path d="M9.5 1.4V4.8Q9.5 5.8 10.5 5.8H14.2Z" fill="#dde8ec"/><path d="M5.7 5.6 L7.9 7.8 L5.7 10 L3.5 7.8 Z" fill="#0e4a60"/><path d="M8.4 7V12" stroke="#b4b4b4" stroke-width="0.9"/><path d="M10.7 6.3 L12.6 8.2 L10.7 10.1 L8.8 8.2 Z M10.8 10.8 L12.7 12.7 L10.8 14.6 L8.9 12.7Z" fill="#ff9a10"/></svg></div>
<div class="tt" style="left:82px;top:405px;font-size:12px;letter-spacing:-0.42px">STRUCT6</div>
<div class="dh" style="left:50px;top:431px;width:11px"></div>
<div class="ic" style="left:61px;top:422px"><svg width="16" height="16" viewBox="0 0 16 16"><path d="M1.6 2Q1.6 0.6 3 0.6H9.5L15 6.1V13.8Q15 15 13.8 15H3Q1.6 15 1.6 13.6Z" fill="#fff" stroke="#4e8696" stroke-width="1.2"/><path d="M9.5 1.4V4.8Q9.5 5.8 10.5 5.8H14.2Z" fill="#dde8ec"/><path d="M5.7 5.6 L7.9 7.8 L5.7 10 L3.5 7.8 Z" fill="#0e4a60"/><path d="M8.4 7V12" stroke="#b4b4b4" stroke-width="0.9"/><path d="M10.7 6.3 L12.6 8.2 L10.7 10.1 L8.8 8.2 Z M10.8 10.8 L12.7 12.7 L10.8 14.6 L8.9 12.7Z" fill="#ff9a10"/></svg></div>
<div class="tt" style="left:82px;top:423px;font-size:12px;letter-spacing:-0.42px">STRUCT7</div>
<div class="dh" style="left:31px;top:449px;width:11px"></div>
<div class="ic" style="left:42px;top:440px"><svg width="16" height="16" viewBox="0 0 16 16"><g transform="translate(0,1)"><path d="M3.6 -1.2 L7.2 2.5 L3.6 6.1 L0 2.5 Z" fill="#10f010"/><path d="M7 3H8.1V12.5H11" stroke="#c8c8c8" stroke-width="1.8" fill="none"/><path d="M13.4 0.6 L16 3.3 L13.4 6.1 L10.8 3.3 Z" fill="#0a12f0"/><path d="M13.4 9.5 L16 12.2 L13.4 15 L10.8 12.2 Z" fill="#0a12f0"/></g></svg></div>
<div class="tt" style="left:63px;top:441px;letter-spacing:0px">Custom Consortium</div>
<div class="dh" style="left:36px;top:467px;width:6px"></div>
<div class="ex" style="left:27px;top:463px"><i class="hm"></i><i class="vm"></i></div>
<div class="ic" style="left:42px;top:458px"><svg width="16" height="16" viewBox="0 0 16 16"><circle cx="8" cy="8" r="7.1" fill="#fff" stroke="#0c4a62" stroke-width="1.7"/><path d="M4 2.8C5 4.2 6.5 3.2 7.5 4.6C8.4 5.8 7.2 7.4 8.6 7.8C10 8.2 10 6.2 11.4 6.8C12.4 7.4 11.2 9.4 9.6 9.4C8 9.4 7.6 10.4 6 10.3C4.6 10.2 3.6 11 2.6 12.4" stroke="#0c4a62" stroke-width="1.5" fill="none"/><path d="M8.6 14.9C8.6 13.2 9.6 12.2 11 12.2C12.4 12.2 13.2 11.4 14 10.2" stroke="#0c4a62" stroke-width="1.5" fill="none"/></svg></div>
<div class="tt" style="left:63px;top:459px;letter-spacing:0px">Global variable</div>
<div class="dh" style="left:17px;top:485px;width:6px"></div>
<div class="ex" style="left:8px;top:481px"><i class="hm"></i><i class="vm"></i></div>
<div class="ic" style="left:23px;top:476px"><svg width="16" height="16" viewBox="0 0 16 16"><path d="M0.7 2.3H15.3V13.5H7L4.5 15.6V13.5H0.7Z" fill="#f2f4f5" stroke="#7ea6b2" stroke-width="1"/><path d="M3.5 5.5H12.5M3.5 10.3H12.5" stroke="#386e82" stroke-width="1.4"/></svg></div>
<div class="tt" style="left:44px;top:477px;letter-spacing:-0.13px">Device Comment</div>
<div class="dh" style="left:17px;top:503px;width:6px"></div>
<div class="ex" style="left:8px;top:499px"><i class="hm"></i><i class="vm"></i></div>
<div class="ic" style="left:23px;top:494px"><svg width="16" height="16" viewBox="0 0 16 16"><path d="M0.6 15.4V1.2H5L6 2.2H15.4V15.4Z" fill="#e4f6f9" stroke="#0c4a62" stroke-width="1.1"/><rect x="0.6" y="2.2" width="14.8" height="3" fill="#fff" stroke="#0c4a62" stroke-width="1"/><path d="M0.6 1.2H5L6 2.6H0.6Z" fill="#0c4a62"/><path d="M11.66 6.68 L12.48 6.93 L12.63 8.26 L13.13 8.67 L14.46 8.56 L14.87 9.32 L14.04 10.36 L14.10 11.00 L15.12 11.86 L14.87 12.68 L13.54 12.83 L13.13 13.33 L13.24 14.66 L12.48 15.07 L11.44 14.24 L10.80 14.30 L9.94 15.32 L9.12 15.07 L8.97 13.74 L8.47 13.33 L7.14 13.44 L6.73 12.68 L7.56 11.64 L7.50 11.00 L6.48 10.14 L6.73 9.32 L8.06 9.17 L8.47 8.67 L8.36 7.34 L9.12 6.93 L10.16 7.76 L10.80 7.70Z" fill="#fff" stroke="#0c4a62" stroke-width="0.9" stroke-linejoin="round"/><circle cx="10.8" cy="11" r="1.4" fill="none" stroke="#0c4a62" stroke-width="1.1"/></svg></div>
<div class="tt" style="left:44px;top:495px;letter-spacing:-0.1px">Parameter</div>
<div class="dh" style="left:12px;top:521px;width:11px"></div>
<div class="ic" style="left:23px;top:512px"><svg width="16" height="16" viewBox="0 0 16 16"><rect x="0" y="1" width="16" height="15" rx="1.2" fill="#74b2b6"/><rect x="3" y="1" width="10" height="6.5" fill="#fff"/><rect x="9.2" y="2.2" width="1" height="3.6" fill="#ff9010"/></svg></div>
<div class="tt" style="left:44px;top:513px;letter-spacing:0px">Device memory</div>
<div class="dh" style="left:17px;top:539px;width:6px"></div>
<div class="ex" style="left:8px;top:535px"><i class="hm"></i></div>
<div class="ic" style="left:23px;top:530px"><svg width="16" height="16" viewBox="0 0 16 16"><circle cx="8" cy="8" r="6.9" fill="#fff" stroke="#0a3c56" stroke-width="2"/><path d="M6.3 4.5L9.8 8L6.3 11.5" stroke="#0a3c56" stroke-width="2.2" fill="none"/></svg></div>
<div class="tt" style="left:44px;top:531px;letter-spacing:-0.12px">Extended Function</div>
<div class="dh" style="left:31px;top:557px;width:11px"></div>
<div class="ic" style="left:42px;top:548px"><svg width="16" height="16" viewBox="0 0 16 16"><g transform="translate(0,1)"><rect x="5.2" y="0" width="4" height="15" fill="#74b2b6"/><path d="M12.00 0.00 L12.70 0.07 L12.99 1.20 L13.44 1.44 L14.55 1.05 L14.99 1.60 L14.40 2.61 L14.55 3.09 L15.60 3.60 L15.53 4.30 L14.40 4.59 L14.16 5.04 L14.55 6.15 L14.00 6.59 L12.99 6.00 L12.51 6.15 L12.00 7.20 L11.30 7.13 L11.01 6.00 L10.56 5.76 L9.45 6.15 L9.01 5.60 L9.60 4.59 L9.45 4.11 L8.40 3.60 L8.47 2.90 L9.60 2.61 L9.84 2.16 L9.45 1.05 L10.00 0.61 L11.01 1.20 L11.49 1.05Z" fill="#fff" stroke="#0c4a62" stroke-width="1" stroke-linejoin="round"/><circle cx="12" cy="3.6" r="1.1" fill="none" stroke="#0c4a62" stroke-width="1"/></g></svg></div>
<div class="tt" style="left:63px;top:549px;letter-spacing:0px">Extension module configuration</div>
<div class="dh" style="left:12px;top:575px;width:11px"></div>
<div class="ic" style="left:23px;top:566px"><svg width="16" height="16" viewBox="0 0 16 16"><path d="M0 4.2H16V6.2H0Z" fill="#0e4a60"/><path d="M9.5 -0.5 L16 5 L9.5 5 Z" fill="#0e4a60"/><path d="M5 8.2H16V10.2H5Z" fill="#000"/><path d="M5 9 L11.5 9 L10.5 14.8 Z" fill="#000"/></svg></div>
<div class="tt" style="left:44px;top:567px;letter-spacing:-0.43px">EtherCAT</div>
<div class="dh" style="left:12px;top:593px;width:11px"></div>
<div class="ic" style="left:23px;top:584px"><svg width="16" height="16" viewBox="0 0 16 16"><g transform="translate(0,1)"><rect x="0" y="-0.5" width="8" height="16" fill="#505050"/><rect x="1" y="0.5" width="6" height="14" fill="#8a8a8a"/><rect x="3" y="2" width="2.2" height="10" fill="#fff"/><rect x="2.5" y="4.5" width="3" height="1" fill="#505050"/><rect x="8.5" y="9.5" width="6.5" height="6" fill="#e0e0e0" stroke="#888"/><path d="M9 10L14.5 15.5M14.5 10L9 15.5" stroke="#888" stroke-width="1"/></g></svg></div>
<div class="tt" style="left:44px;top:585px;letter-spacing:0.28px">Motion control axis</div>
<div class="dh" style="left:12px;top:611px;width:11px"></div>
<div class="ic" style="left:23px;top:602px"><svg width="16" height="16" viewBox="0 0 16 16"><g transform="translate(0,1)"><path d="M0 2 L3 1 L8 6 L6 9 Z" fill="#2e5e6a"/><ellipse cx="9" cy="7.5" rx="5" ry="4" transform="rotate(35 9 7.5)" fill="#7cc4ca"/><path d="M7 7 L16 12.5" stroke="#0e5a74" stroke-width="2.2"/><path d="M13 10.8 L16 12.5" stroke="#2aa8d0" stroke-width="2.2"/></g></svg></div>
<div class="tt" style="left:44px;top:603px;letter-spacing:0px">Electronic CAM table</div></div></div>
</body></html>
